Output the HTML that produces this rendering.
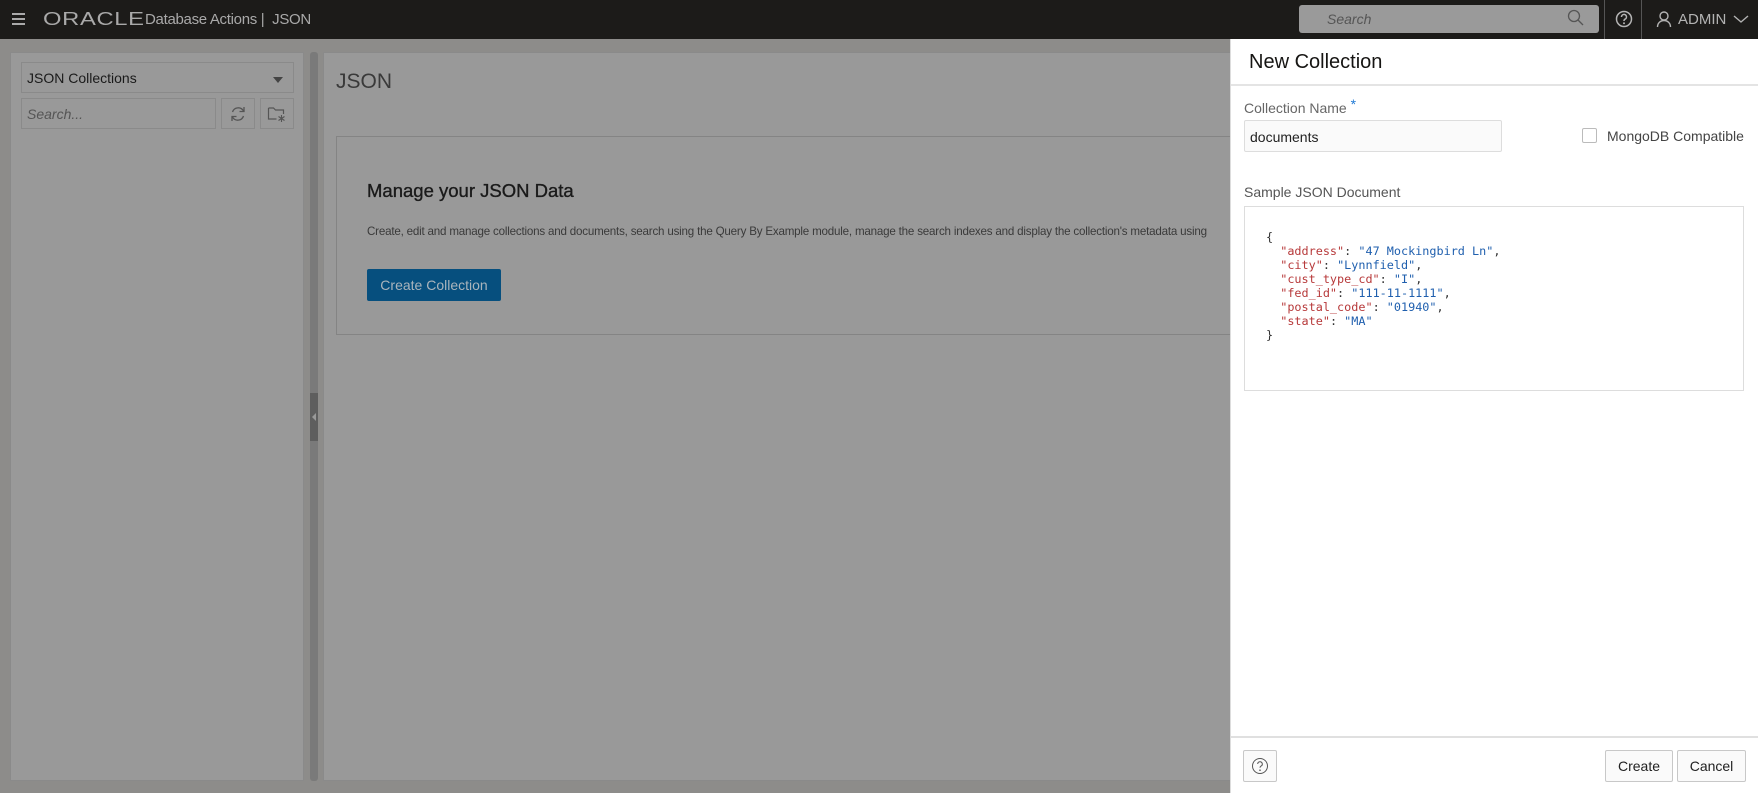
<!DOCTYPE html>
<html><head><meta charset="utf-8"><style>
*{box-sizing:border-box;margin:0;padding:0}
body{width:1758px;height:793px;overflow:hidden;background:#8d8c8a;font-family:"Liberation Sans",sans-serif;position:relative}
.abs{position:absolute}
.top{left:0;top:0;width:1758px;height:39px;background:#1c1b19}
.panel{background:#999;border:1px solid #8a8a8a}
.in{border:1px solid #8a8a8a;background:#999}
.mono{font-family:"DejaVu Sans Mono","Liberation Mono",monospace;font-size:11.8px;white-space:pre;line-height:14px;color:#333}
.k{color:#b7393a}.v{color:#1f5fae}
.btn{border:1px solid #c8c8c8;border-radius:2px;background:#fafafa;font-size:14px;color:#222;text-align:center;line-height:30px}
</style></head><body>
<div class="abs top"></div>
<div class="abs" style="left:12px;top:13px;width:13px;height:12px;border-top:2px solid #aaa;border-bottom:2px solid #aaa"><div style="margin-top:3px;border-top:2px solid #aaa"></div></div>
<div class="abs" style="left:43px;top:9px;font-size:18px;color:#a9a9a9;letter-spacing:0.5px;font-weight:normal;transform:scaleX(1.32);transform-origin:left">ORACLE</div>
<div class="abs" style="left:145px;top:11px;font-size:15px;color:#a9a9a9;letter-spacing:-0.3px">Database Actions |&nbsp; JSON</div>
<div class="abs" style="left:1299px;top:5px;width:300px;height:28px;background:#9a9a9a;border-radius:3px"></div>
<div class="abs" style="left:1327px;top:11px;font-size:14px;font-style:italic;color:#555">Search</div>
<svg class="abs" style="left:1567px;top:9px" width="18" height="18"><circle cx="7" cy="7" r="5.5" fill="none" stroke="#555" stroke-width="1.3"/><path d="M11 11l5 5" stroke="#555" stroke-width="1.3"/></svg>
<div class="abs" style="left:1604px;top:0;width:1px;height:39px;background:#555"></div>
<div class="abs" style="left:1641px;top:0;width:1px;height:39px;background:#555"></div>
<svg class="abs" style="left:1615px;top:10px" width="18" height="18"><circle cx="9" cy="9" r="7.5" fill="none" stroke="#b3b3b3" stroke-width="1.5"/><path d="M6.5 7a2.5 2.5 0 1 1 3.5 2.2c-.8.4-1 .8-1 1.8" fill="none" stroke="#b3b3b3" stroke-width="1.5"/><circle cx="9" cy="13.3" r="1" fill="#b3b3b3"/></svg>
<svg class="abs" style="left:1656px;top:11px" width="16" height="17"><circle cx="8" cy="5" r="4" fill="none" stroke="#b3b3b3" stroke-width="1.4"/><path d="M1.5 16c0-4 3-6.5 6.5-6.5s6.5 2.5 6.5 6.5" fill="none" stroke="#b3b3b3" stroke-width="1.4"/></svg>
<div class="abs" style="left:1678px;top:11px;font-size:15px;color:#b3b3b3">ADMIN</div>
<svg class="abs" style="left:1733px;top:14px" width="16" height="10"><path d="M1 2l7 6 7-6" fill="none" stroke="#b3b3b3" stroke-width="1.4"/></svg>

<div class="abs panel" style="left:10px;top:52px;width:294px;height:729px"></div>
<div class="abs in" style="left:21px;top:62px;width:273px;height:31px"></div>
<div class="abs" style="left:27px;top:70px;font-size:14px;color:#1a1a1a">JSON Collections</div>
<div class="abs" style="left:273px;top:77px;width:0;height:0;border-left:5px solid transparent;border-right:5px solid transparent;border-top:6px solid #444"></div>
<div class="abs in" style="left:21px;top:98px;width:195px;height:31px"></div>
<div class="abs" style="left:27px;top:106px;font-size:14px;font-style:italic;color:#555">Search...</div>
<div class="abs in" style="left:221px;top:98px;width:34px;height:31px"></div>
<svg class="abs" style="left:229px;top:105px" width="18" height="18"><path d="M14.5 6A6 6 0 0 0 3.5 7M3.5 12A6 6 0 0 0 14.5 11" fill="none" stroke="#555" stroke-width="1.3"/><path d="M15 2v4.5h-4.5M3 16v-4.5h4.5" fill="none" stroke="#555" stroke-width="1.3"/></svg>
<div class="abs in" style="left:260px;top:98px;width:34px;height:31px"></div>
<svg class="abs" style="left:267px;top:105px" width="20" height="18"><path d="M1.5 3h5l2 2h8v4M1.5 3v11h8" fill="none" stroke="#555" stroke-width="1.2"/><path d="M14.5 10v7M11.5 11.5l6 4M17.5 11.5l-6 4" stroke="#555" stroke-width="1.1"/></svg>

<div class="abs" style="left:310px;top:52px;width:8px;height:729px;background:#7a7a7a;border-radius:3px"></div>
<div class="abs" style="left:310px;top:393px;width:8px;height:48px;background:#5e5e5e"></div>
<div class="abs" style="left:312px;top:413px;width:0;height:0;border-top:4px solid transparent;border-bottom:4px solid transparent;border-right:4px solid #999"></div>

<div class="abs panel" style="left:323px;top:52px;width:1000px;height:729px"></div>
<div class="abs" style="left:336px;top:70px;font-size:21px;color:#3a3a3a;font-weight:300">JSON</div>
<div class="abs" style="left:336px;top:136px;width:1000px;height:199px;border:1px solid #848484;background:#999"></div>
<div class="abs" style="left:367px;top:180px;font-size:18.5px;color:#1a1a1a;-webkit-text-stroke:0.35px #1a1a1a">Manage your JSON Data</div>
<div class="abs" style="left:367px;top:225px;font-size:11.6px;color:#3a3a3a;white-space:nowrap;letter-spacing:-0.2px">Create, edit and manage collections and documents, search using the Query By Example module, manage the search indexes and display the collection's metadata using</div>
<div class="abs" style="left:367px;top:269px;width:134px;height:32px;background:#064f7e;border-radius:2px;color:#aab4bc;font-size:14px;text-align:center;line-height:32px">Create Collection</div>

<div class="abs" style="left:1230px;top:39px;width:528px;height:754px;background:#fff;border-left:1px solid #ddd"></div>
<div class="abs" style="left:1249px;top:51px;font-size:20px;color:#161513">New Collection</div>
<div class="abs" style="left:1231px;top:84px;width:527px;height:2px;background:#e4e4e4"></div>
<div class="abs" style="left:1244px;top:100px;font-size:14px;color:#666">Collection Name <span style="color:#227bd5;position:relative;top:-4px">*</span></div>
<div class="abs" style="left:1244px;top:120px;width:258px;height:32px;border:1px solid #ddd;background:#fafafa;border-radius:2px"></div>
<div class="abs" style="left:1250px;top:129px;font-size:14px;color:#222">documents</div>
<div class="abs" style="left:1582px;top:128px;width:15px;height:15px;border:1px solid #bbb;border-radius:2px"></div>
<div class="abs" style="left:1607px;top:128px;font-size:14px;color:#444">MongoDB Compatible</div>
<div class="abs" style="left:1244px;top:184px;font-size:14px;color:#555">Sample JSON Document</div>
<div class="abs" style="left:1244px;top:206px;width:500px;height:185px;border:1px solid #ddd"></div>
<div class="abs mono" style="left:1266px;top:230px">{
  <span class="k">"address"</span>: <span class="v">"47 Mockingbird Ln"</span>,
  <span class="k">"city"</span>: <span class="v">"Lynnfield"</span>,
  <span class="k">"cust_type_cd"</span>: <span class="v">"I"</span>,
  <span class="k">"fed_id"</span>: <span class="v">"111-11-1111"</span>,
  <span class="k">"postal_code"</span>: <span class="v">"01940"</span>,
  <span class="k">"state"</span>: <span class="v">"MA"</span>
}</div>
<div class="abs" style="left:1231px;top:736px;width:527px;height:2px;background:#e0e0e0"></div>
<div class="abs btn" style="left:1243px;top:750px;width:34px;height:32px"></div>
<svg class="abs" style="left:1251px;top:757px" width="18" height="18"><circle cx="9" cy="9" r="7.5" fill="none" stroke="#555" stroke-width="1"/><path d="M6.7 7a2.3 2.3 0 1 1 3.3 2.1c-.7.4-1 .8-1 1.7" fill="none" stroke="#555" stroke-width="1"/><circle cx="9" cy="13.2" r=".8" fill="#555"/></svg>
<div class="abs btn" style="left:1605px;top:750px;width:68px;height:32px">Create</div>
<div class="abs btn" style="left:1677px;top:750px;width:69px;height:32px">Cancel</div>
</body></html>
